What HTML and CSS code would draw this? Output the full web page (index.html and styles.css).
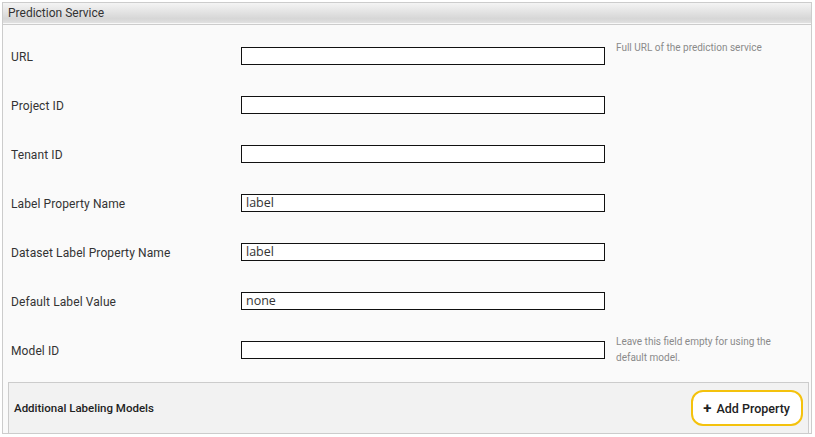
FILE: index.html
```html
<!DOCTYPE html>
<html lang="en">
<head>
<meta charset="UTF-8" />
<title>Prediction Service</title>
<link rel="stylesheet" href="styles.css">
</head>
<body>

<div class="panel">
  <div class="panel-head">Prediction Service</div>

  <div class="panel-body">
    <div class="row">
      <label class="row-label">URL</label>
      <input class="row-input" type="text" value="">
      <div class="row-help">Full URL of the prediction service</div>
    </div>
    <div class="row">
      <label class="row-label">Project ID</label>
      <input class="row-input" type="text" value="">
      <div class="row-help"></div>
    </div>
    <div class="row">
      <label class="row-label">Tenant ID</label>
      <input class="row-input" type="text" value="">
      <div class="row-help"></div>
    </div>
    <div class="row">
      <label class="row-label">Label Property Name</label>
      <input class="row-input" type="text" value="label">
      <div class="row-help"></div>
    </div>
    <div class="row">
      <label class="row-label">Dataset Label Property Name</label>
      <input class="row-input" type="text" value="label">
      <div class="row-help"></div>
    </div>
    <div class="row">
      <label class="row-label">Default Label Value</label>
      <input class="row-input" type="text" value="none">
      <div class="row-help"></div>
    </div>
    <div class="row">
      <label class="row-label">Model ID</label>
      <input class="row-input" type="text" value="">
      <div class="row-help">Leave this field empty for using the default model.</div>
    </div>

    <div class="models">
      <span class="models-title">Additional Labeling Models</span>
      <button class="btn-add"><span class="plus">+</span> Add Property</button>
    </div>
  </div>
</div>

</body>
</html>
```

FILE: styles.css
```css
* {
  margin: 0; padding: 0; box-sizing: border-box;
}
html, body {
  background: #fff;
  font-family: Roboto, 'Noto Sans', sans-serif;
  color: #333;
}
body {
  padding: 2px 3px 0 2px;
}

/* Panel */
.panel {
  width: 810px;
  border: 1px solid #ccc;
  background: #fafafa;
}
.panel-head {
  height: 22px;
  padding: 3px 5px 0;
  font-size: 12px;
  color: #333;
  background: linear-gradient(#f4f4f4, #d6d6d6 75%, #e4e4e4);
  border-bottom: 1px solid #ccc;
  box-shadow: inset 0 -1px 0 #f8f8f8;
}
.panel-body {
  padding: 6px 2px 0 5px;
}

/* Rows */
.row {
  display: flex;
  align-items: center;
  height: 49px;
}
.row-label {
  width: 233px;
  padding: 2px 0 0 3px;
  font-size: 12px;
  letter-spacing: 0.1px;
  color: #333;
}
.row-input {
  width: 364px;
  height: 18px;
  border: 1px solid #111;
  background: #fff;
  padding: 0 4px;
  font-family: 'Open Sans', Roboto, sans-serif;
  font-size: 12.5px;
  color: #333;
  outline: none;
}
.row-help {
  align-self: flex-start;
  margin-top: 9px;
  margin-left: 11px;
  width: 172px;
  font-size: 10px;
  line-height: 16px;
  color: #8a8a8a;
}
.row:last-of-type .row-help {
  margin-top: 3px;
}

/* Additional models */
.models {
  margin-top: 8px;
  height: 51px;
  display: flex;
  align-items: center;
  justify-content: space-between;
  padding: 0 5px 0 5px;
  background: #f2f2f2;
  border: 1px solid #ccc;
  border-bottom: none;
}
.models-title {
  font-size: 11.5px;
  font-weight: 500;
  color: #222;
}
.btn-add {
  height: 36px;
  padding: 0 11px 0 10px;
  border: 2px solid #f4c20d;
  border-radius: 12px;
  background: #fff;
  font-family: Roboto, sans-serif;
  font-size: 12.5px;
  font-weight: 500;
  color: #222;
  cursor: pointer;
}
.btn-add .plus {
  font-weight: 700;
  font-size: 15px;
  margin-right: 2px;
}
```
